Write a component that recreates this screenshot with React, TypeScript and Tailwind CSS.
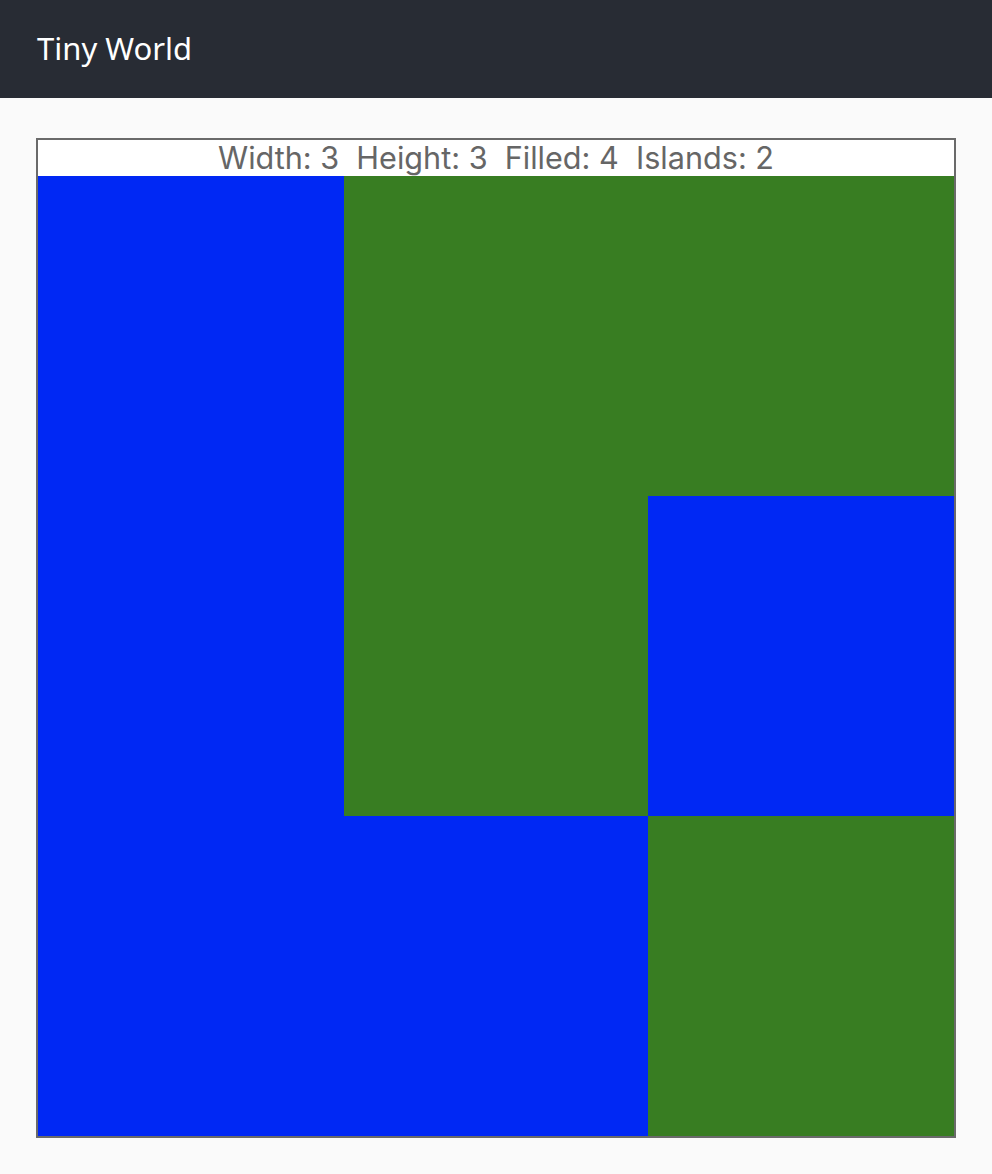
const grid = [
  [false, true, true],
  [false, true, false],
  [false, false, true],
];

const App = () => {
  const filled = grid.flat().filter(Boolean).length;

  return (
    <div className="min-h-screen bg-[#fafafa]">
      {/* Header */}
      <header className="h-[98px] bg-[#282c34] flex items-center pl-[37px]">
        <h1 className="text-[31px] text-white font-['Noto_Sans',sans-serif] pb-[2px]">Tiny World</h1>
      </header>

      {/* World */}
      <main className="px-[36px] pt-[40px] pb-[36px]">
        <div className="w-[920px] border-2 border-[#6a6a6a] bg-white">
          <p className="h-[36px] leading-[36px] text-center text-[30.6px] text-[#666] font-['Inter',sans-serif] whitespace-pre">
            {`Width: 3  Height: 3  Filled: ${filled}  Islands: 2`}
          </p>
          <div className="grid grid-cols-[306px_304px_306px]">
            {grid.flat().map((land, i) => (
              <div
                key={i}
                className={land ? "h-[320px] bg-[#387d22]" : "h-[320px] bg-[#0028f4]"}
              />
            ))}
          </div>
        </div>
      </main>
    </div>
  );
};

export default App;
